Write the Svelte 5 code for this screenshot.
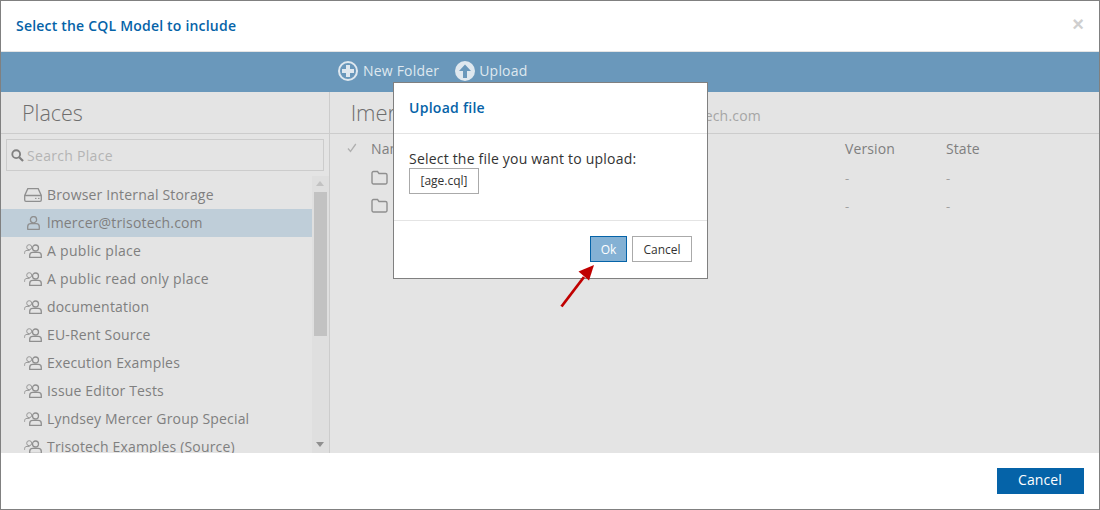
<script>
  const places = ['A public place','A public read only place','documentation','EU-Rent Source','Execution Examples','Issue Editor Tests','Lyndsey Mercer Group Special','Trisotech Examples (Source)'];
</script>

<div class="window">
  <header class="head">
    <h1>Select the CQL Model to include</h1>
    <span class="close">×</span>
  </header>
  <div class="toolbar">
    <span class="tool">
      <svg viewBox="0 0 20 20" width="20" height="20"><circle cx="10" cy="10" r="9" fill="none" stroke="#dfe8ef" stroke-width="2"/><path d="M8 4h4v4h4v4h-4v4H8v-4H4V8h4z" fill="#dfe8ef"/></svg>
      <span class="tl">New Folder</span>
    </span>
    <span class="tool">
      <svg viewBox="0 0 20 20" width="20" height="20"><circle cx="10" cy="10" r="10" fill="#dfe8ef"/><path d="M10 3.500 16 10h-4v7H8v-7H4z" fill="#6a98bb"/></svg>
      <span class="tl">Upload</span>
    </span>
  </div>
  <div class="body">
    <aside class="left">
      <div class="places-title">Places</div>
      <div class="search">
        <svg viewBox="0 0 14 14" width="13" height="13"><circle cx="5.600" cy="5.600" r="4.200" fill="none" stroke="#808080" stroke-width="2"/><path d="M8.800 8.800 13 13" stroke="#808080" stroke-width="2.400"/></svg>
        <span>Search Place</span>
      </div>
      <div class="listwrap">
        <ul class="list">
          <li>
            <svg class="ic" viewBox="0 0 18 14" width="18" height="14"><path d="M3.800 .7h10.400L17.300 7.500V12a1.300 1.300 0 0 1-1.300 1.300H2A1.300 1.300 0 0 1 .7 12V7.500zM.7 7.500h16.600" fill="none" stroke="#8f8f8f" stroke-width="1.300"/><path d="M11 10.400h1.500M14 10.400h1.500" stroke="#8f8f8f"/></svg>
            Browser Internal Storage
          </li>
          <li class="sel">
            <svg class="ic" viewBox="0 0 18 14" width="18" height="14"><circle cx="9.500" cy="3.700" r="3.100" fill="none" stroke="#8f8f8f" stroke-width="1.300"/><path d="M3.700 13.300v-2.600c0-1.900 1.400-3 3-3h5.600c1.600 0 3 1.100 3 3v2.600z" fill="none" stroke="#8f8f8f" stroke-width="1.300" stroke-linejoin="round"/></svg>
            lmercer@trisotech.com
          </li>
          {#each places as p}
            <li class:wide={p.startsWith('A ')}>
              <svg class="ic" viewBox="0 0 18 14" width="18" height="14"><circle cx="11.500" cy="4" r="3" fill="none" stroke="#8f8f8f" stroke-width="1.300"/><path d="M5.700 13.400v-2c0-1.900 1.300-3 3-3h5.600c1.700 0 3 1.100 3 3v2z" fill="none" stroke="#8f8f8f" stroke-width="1.300" stroke-linejoin="round"/><circle cx="5.200" cy="3.200" r="2.500" fill="none" stroke="#999"/><path d="M.6 9.800V8.700c0-1.400.9-2.300 2.400-2.300h2.600" fill="none" stroke="#999"/></svg>
              {p}
            </li>
          {/each}
        </ul>
        <div class="scroll">
          <i class="up"></i>
          <b class="thumb"></b>
          <i class="down"></i>
        </div>
      </div>
    </aside>
    <section class="right">
      <div class="crumb"><span class="big">lmercer@trisotech.com</span><span class="small">lmercer@trisotech.com</span></div>
      <div class="grid tablehead">
        <svg class="check" viewBox="0 0 10 10" width="10" height="10"><path d="M1 5.500 3.500 8.500 8.800 1" fill="none" stroke="#b0b0b0" stroke-width="1.300"/></svg><span>Name</span><span>Modified By</span><span>Version</span><span>State</span>
      </div>
      {#each [1,2] as r}
        <div class="grid row">
          <span></span>
          <span><svg viewBox="0 0 17 15" width="17" height="15"><path d="M1 3a1.500 1.500 0 0 1 1.500-1.500h4L8 3.500h6.500A1.500 1.500 0 0 1 16 5v7.500a1.500 1.500 0 0 1-1.500 1.500h-12A1.500 1.500 0 0 1 1 12.500z" fill="none" stroke="#8f8f8f" stroke-width="1.400"/></svg></span>
          <span></span><span class="dash">-</span><span class="dash">-</span>
        </div>
      {/each}
    </section>
  </div>
  <footer class="foot"><button class="primary">Cancel</button></footer>

  <div class="dialog">
    <div class="d-title">Upload file</div>
    <div class="d-body">
      <p>Select the file you want to upload:</p>
      <span class="file">[age.cql]</span>
    </div>
    <div class="d-foot">
      <button class="ok">Ok</button>
      <button class="cancel">Cancel</button>
    </div>
  </div>
  <svg class="arrow" viewBox="0 0 40 50" width="40" height="50"><path d="M1.500 47.500 24 18" stroke="#c00000" stroke-width="2.800"/><path d="M34 6 18.500 12.500 29 21.500z" fill="#c00000"/></svg>
</div>

<style>
  :global(body) { margin: 0; }
  * { box-sizing: border-box; }
  .window {
    position: relative; width: 1100px; height: 510px; display: flex; flex-direction: column;
    border: 1px solid #808080; background: #fff; font-family: "Open Sans", sans-serif; overflow: hidden;
  }
  .head { height: 51px; flex: none; display: flex; align-items: center; justify-content: space-between; padding: 0 15px; border-bottom: 1px solid #e4e4e4; }
  h1 { margin: 0; font-size: 14px; font-weight: 600; color: #0563a8; line-height: 50px; letter-spacing: .2px; }
  .close { font: bold 20px "Liberation Sans", sans-serif; color: #cfcfcf; position: relative; top: -2px; }
  .toolbar { height: 40px; flex: none; background: #6a98bb; display: flex; align-items: center; gap: 16px; padding: 0 0 2px 337px; color: #dfe8ef; font-size: 14px; letter-spacing: .2px; }
  .tool { display: flex; align-items: center; gap: 5px; }
  .tl { margin-bottom: 2px; }
  .tool:last-child { gap: 4px; }
  .body { flex: 1; min-height: 0; display: flex; background: #e4e4e4; }
  .left { width: 329px; flex: none; border-right: 1px solid #cccccc; display: flex; flex-direction: column; min-height: 0; }
  .places-title { height: 42px; flex: none; border-bottom: 1px solid #cccccc; padding-left: 21px; font-size: 21.500px; font-weight: 300; line-height: 41px; color: #6e6e6e; }
  .search { margin: 5px 5px 0 5px; height: 32px; flex: none; border: 1px solid #cccccc; display: flex; align-items: center; gap: 3px; padding-left: 4px; font-size: 14px; color: #b4b4b4; letter-spacing: .3px; }
  .listwrap { flex: 1; min-height: 0; display: flex; margin-top: 5px; overflow: hidden; }
  .list { list-style: none; margin: 0; padding: 5px 0 0; flex: 1; min-width: 0; }
  .list li { height: 28px; display: flex; align-items: center; gap: 5px; padding: 0 0 2px 23px; font-size: 14px; color: #7f7f7f; white-space: nowrap; letter-spacing: .17px; }
  .list li.wide { letter-spacing: .3px; }
  .list li.sel { background: #bfced9; }
  .ic { flex: none; position: relative; top: 1px; }
  .scroll { width: 17px; flex: none; background: #dfdfdf; position: relative; }
  .thumb { position: absolute; left: 2px; right: 2px; top: 16px; height: 144px; background: #c2c2c2; }
  .up, .down { position: absolute; left: 4px; width: 0; height: 0; border: 4px solid transparent; }
  .up { top: 5px; border-bottom: 5px solid #c2c2c2; border-top: 0; }
  .down { bottom: 6px; border-top: 5px solid #8f8f8f; border-bottom: 0; }
  .right { flex: 1; min-width: 0; overflow: hidden; }
  .crumb { height: 42px; border-bottom: 1px solid #cccccc; padding: 0 0 2px 21px; display: flex; align-items: center; gap: 23px; color: #7f7f7f; white-space: nowrap; }
  .big { font-size: 22px; font-weight: 300; color: #6e6e6e; }
  .small { font-size: 14px; color: #a6a6a6; position: relative; top: 4px; letter-spacing: .2px; }
  .grid { display: grid; grid-template-columns: 41px 150px 324px 101px 1fr; font-size: 14px; color: #7f7f7f; align-items: center; height: 28px; letter-spacing: .1px; }
  .tablehead { height: 29px; padding-bottom: 1px; }
  .check { margin-left: 17px; }
  .row { color: #a0a0a0; font-size: 13px; }
  .row svg { display: block; }
  .dash { padding-top: 2px; }
  .foot { height: 56px; flex: none; display: flex; justify-content: flex-end; align-items: center; padding-right: 15px; background: #fff; }
  button { font-family: inherit; cursor: pointer; }
  .primary { width: 87px; height: 26px; background: #0563a8; color: #fff; border: 0; font-size: 14px; padding: 0 1px 4px 0; letter-spacing: .1px; }
  .dialog { position: absolute; left: 392px; top: 81px; width: 315px; height: 197px; background: #fff; border: 1px solid #808080; display: flex; flex-direction: column; }
  .d-title { height: 51px; flex: none; padding-left: 15px; border-bottom: 1px solid #e4e4e4; font-size: 14px; font-weight: 600; color: #0563a8; line-height: 49px; letter-spacing: .27px; }
  .d-body { height: 87px; flex: none; padding: 15px 15px 0; border-bottom: 1px solid #e4e4e4; font-size: 14px; color: #333; }
  .d-body p { margin: 0; line-height: 19px; letter-spacing: .2px; }
  .file { display: block; width: 70px; height: 26px; border: 1px solid #aaa; font-size: 12px; line-height: 24px; text-align: center; }
  .d-foot { flex: 1; display: flex; justify-content: flex-end; align-items: flex-start; gap: 5px; padding: 15px 15px 0 0; }
  .ok, .cancel { height: 26px; font-size: 12px; padding: 0; }
  .ok { width: 37px; background: #84b1d4; border: 1px solid #0563a8; color: #fff; }
  .cancel { width: 60px; background: #fff; border: 1px solid #aaa; color: #333; }
  .arrow { position: absolute; left: 559px; top: 258px; }
</style>
